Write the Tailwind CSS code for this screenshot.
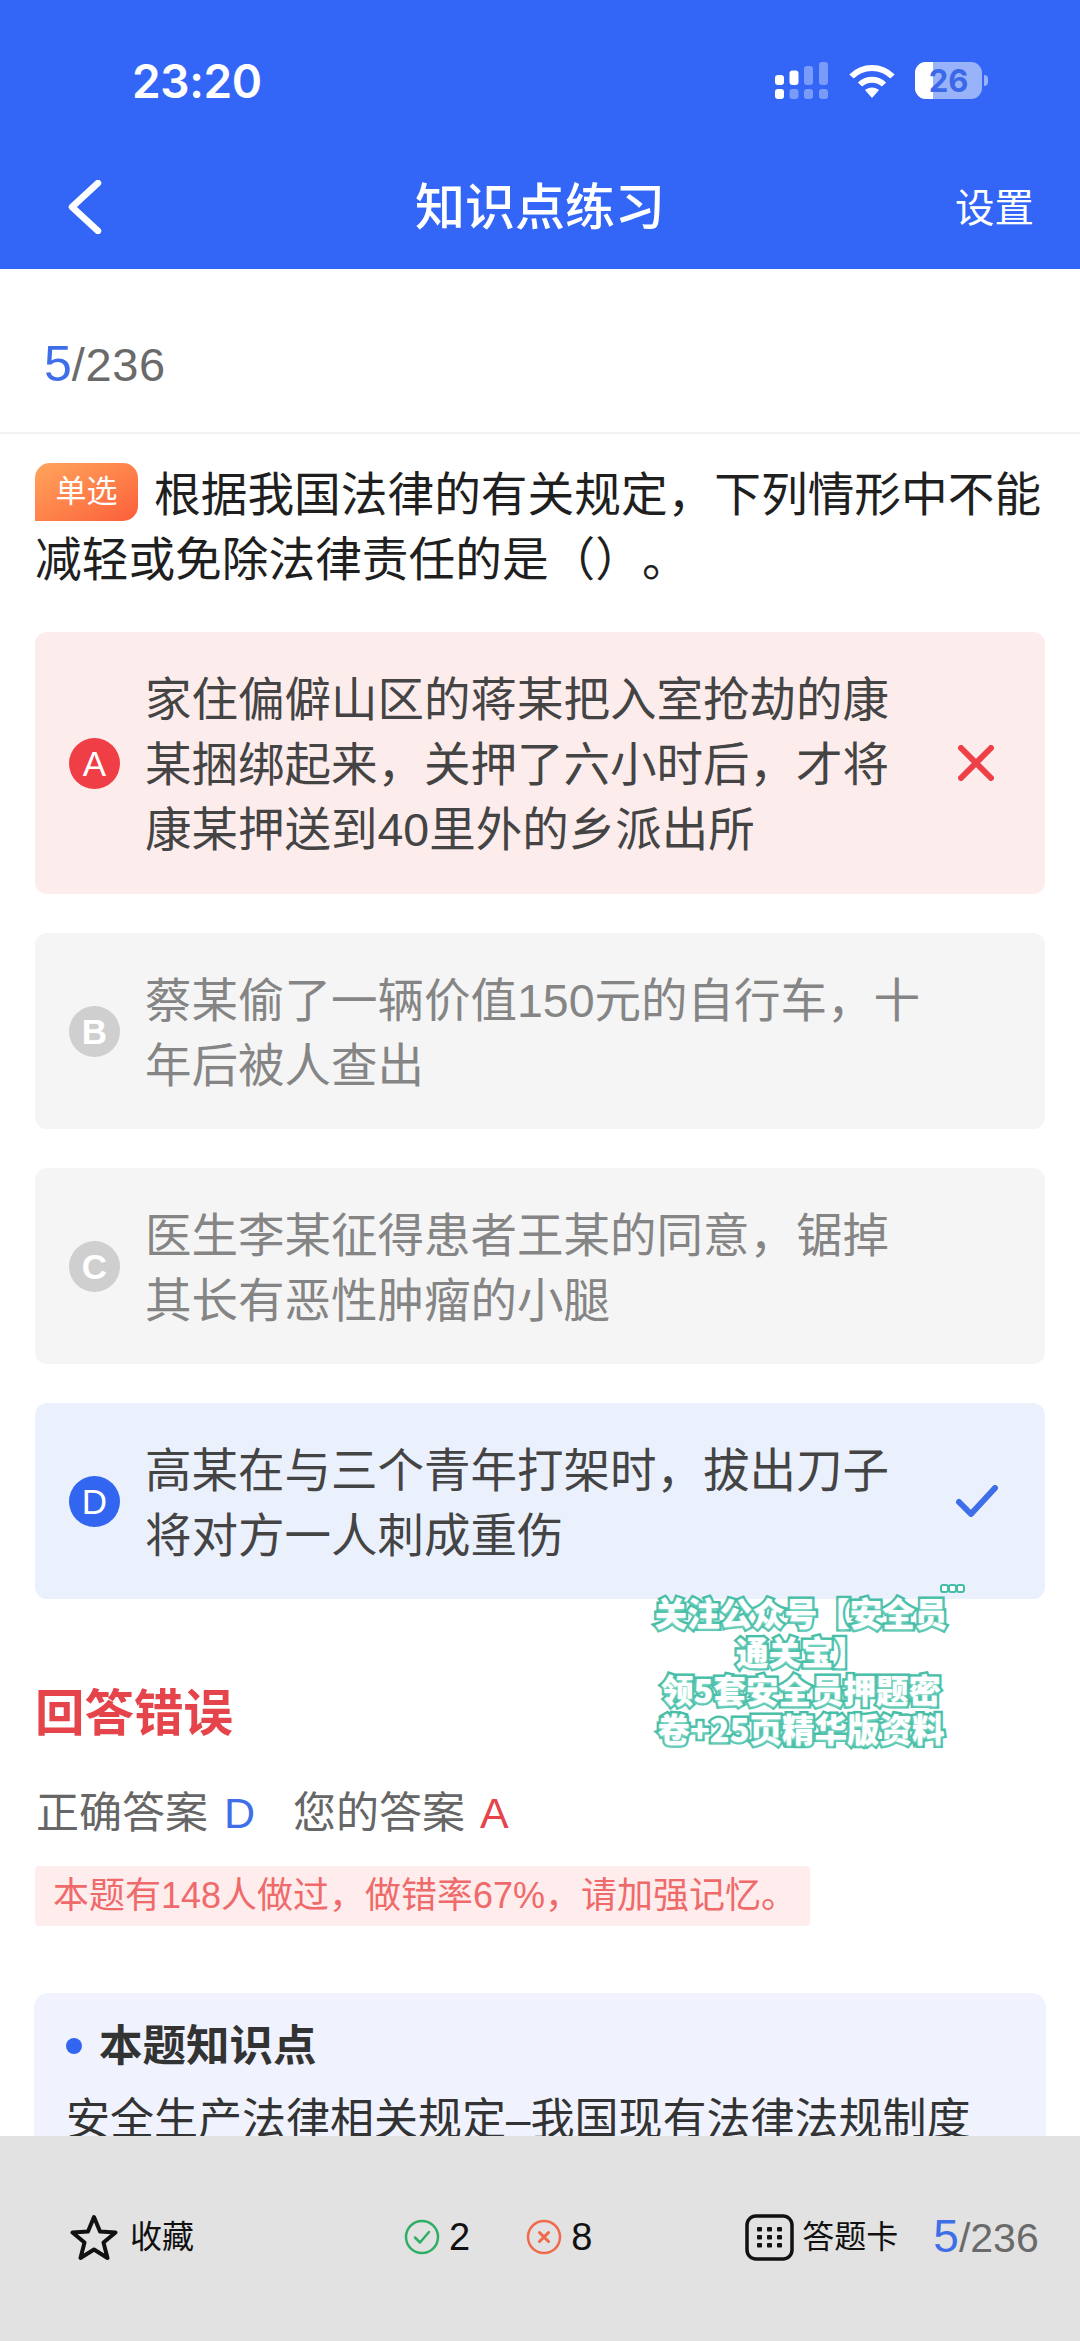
<!DOCTYPE html>
<html lang="zh-CN">
<head>
<meta charset="utf-8">
<script src="https://cdn.jsdelivr.net/npm/@tailwindcss/browser@4"></script>
</head>
<body class="bg-white">
<div class="relative w-[1080px] h-[2341px] overflow-hidden flex flex-col bg-white font-['Liberation_Sans','Noto_Sans_CJK_SC',sans-serif] [text-spacing-trim:space-all]">

  <!-- Header -->
  <header class="h-[269px] shrink-0 bg-[#3366f6] text-white">
    <div class="h-[162px] pt-[51px] flex items-start pl-[132px] pr-[90px]">
      <span class="font-['Inter',sans-serif] font-semibold text-[46px] leading-[60px] tracking-[-0.4px]">23:20</span>
      <div class="ml-auto flex items-center gap-[21px] pt-[11px]">
        <svg width="53" height="37" viewBox="0 0 53 37" fill="#fff">
          <rect x="0" y="13" width="9" height="10" rx="3"/>
          <rect x="14.500" y="8.500" width="9" height="14.500" rx="3"/>
          <rect x="29" y="4" width="9" height="19" rx="3" opacity=".35"/>
          <rect x="44" y="0" width="9" height="23" rx="3" opacity=".35"/>
          <rect x="0" y="27" width="9" height="10" rx="3"/>
          <rect x="14.500" y="27" width="9" height="10" rx="3" opacity=".35"/>
          <rect x="29" y="27" width="9" height="10" rx="3" opacity=".35"/>
          <rect x="44" y="27" width="9" height="10" rx="3" opacity=".35"/>
        </svg>
        <svg width="46" height="34" viewBox="0 0 46 34" fill="none" stroke="#fff" stroke-width="6">
          <path d="M2.500 12.500C13.500 1 32.500 1 43.500 12.500"/>
          <path d="M11 20.500C17.500 14 28.500 14 35 20.500"/>
          <path d="M16 26L23 34L30 26C26 22.500 20 22.500 16 26Z" fill="#fff" stroke="none"/>
        </svg>
        <div class="relative w-[75px] h-[37px] -ml-[1px]">
          <div class="absolute left-0 top-0 w-[67px] h-[37px] rounded-[11px] bg-white/50 overflow-hidden">
            <div class="w-[18px] h-full bg-white"></div>
          </div>
          <div class="absolute left-[69px] top-[13px] w-[4px] h-[11px] rounded-r-[4px] bg-white/50"></div>
          <span class="absolute left-0 top-0 w-[67px] text-center font-['Inter',sans-serif] font-bold text-[31px] leading-[37px] text-[#3a68e8]">26</span>
        </div>
      </div>
    </div>
    <div class="relative h-[106px] -mt-[1px] flex items-center justify-center pb-[12px]">
      <svg class="absolute left-[67px] top-[19px]" width="36" height="54" viewBox="0 0 36 54" fill="none" stroke="#fff" stroke-width="6.500" stroke-linecap="round" stroke-linejoin="round">
        <path d="M31 3L5 27L31 51"/>
      </svg>
      <h1 class="text-[50px] leading-[60px] font-medium">知识点练习</h1>
      <span class="absolute left-[955px] top-[23px] text-[39.500px] leading-[48px]">设置</span>
    </div>
  </header>

  <!-- Content -->
  <main class="flex-1 min-h-0 overflow-hidden">
    <div class="h-[165px] border-b-[2px] border-[#f2f2f2] pl-[44px] pt-[67px] flex items-baseline text-[#6a6a6a]">
      <span class="text-[50px] leading-[56px] text-[#3f6fe8]">5</span><span class="text-[47px] leading-[56px] tracking-[0.6px] font-light">/236</span>
    </div>

    <div class="px-[35px] pt-[29px]">
      <p class="text-[46.700px] leading-[65px] text-[#1f1f1f] whitespace-nowrap">
        <span class="inline-block align-[9px] w-[103px] h-[58px] -my-[30px] mr-[16px] rounded-r-[15px] rounded-tl-[15px] bg-gradient-to-br from-[#ffa45c] to-[#fb5d3a] text-white text-[31px] leading-[58px] text-center">单选</span>根据我国法律的有关规定，下列情形中不能<br>减轻或免除法律责任的是（）。
      </p>

      <div class="mt-[39px] flex flex-col gap-[39px]">
        <div class="flex items-center h-[262px] rounded-[12px] bg-[#fdecec] pl-[34px] pr-[51px]">
          <span class="w-[51px] h-[51px] shrink-0 rounded-full bg-[#ef3e46] text-white text-[35px] leading-[51px] text-center">A</span>
          <p class="ml-[25px] pt-[5px] text-[46.500px] leading-[65px] text-[#444] whitespace-nowrap">家住偏僻山区的蒋某把入室抢劫的康<br>某捆绑起来，关押了六小时后，才将<br>康某押送到40里外的乡派出所</p>
          <svg class="ml-auto" width="36" height="36" viewBox="0 0 36 36" fill="none" stroke="#ee4048" stroke-width="6" stroke-linecap="round"><path d="M3 3L33 33M33 3L3 33"/></svg>
        </div>

        <div class="flex items-center h-[196px] rounded-[12px] bg-[#f5f5f5] pl-[34px] pr-[54px]">
          <span class="w-[51px] h-[51px] shrink-0 rounded-full bg-[#cfcfcf] text-white text-[35px] font-bold leading-[51px] text-center">B</span>
          <p class="ml-[25px] pt-[5px] text-[46.500px] leading-[65px] text-[#858585] whitespace-nowrap">蔡某偷了一辆价值150元的自行车，十<br>年后被人查出</p>
        </div>

        <div class="flex items-center h-[196px] rounded-[12px] bg-[#f5f5f5] pl-[34px] pr-[54px]">
          <span class="w-[51px] h-[51px] shrink-0 rounded-full bg-[#cfcfcf] text-white text-[35px] font-bold leading-[51px] text-center">C</span>
          <p class="ml-[25px] pt-[5px] text-[46.500px] leading-[65px] text-[#858585] whitespace-nowrap">医生李某征得患者王某的同意，锯掉<br>其长有恶性肿瘤的小腿</p>
        </div>

        <div class="flex items-center h-[196px] rounded-[12px] bg-[#ebf0fd] pl-[34px] pr-[47px]">
          <span class="w-[51px] h-[51px] shrink-0 rounded-full bg-[#3366f0] text-white text-[35px] leading-[51px] text-center">D</span>
          <p class="ml-[25px] pt-[5px] text-[46.500px] leading-[65px] text-[#444] whitespace-nowrap">高某在与三个青年打架时，拔出刀子<br>将对方一人刺成重伤</p>
          <svg class="ml-auto" width="42" height="32" viewBox="0 0 42 32" fill="none" stroke="#3f6fe8" stroke-width="6" stroke-linecap="round" stroke-linejoin="round"><path d="M3 17L15 29L39 3"/></svg>
        </div>
      </div>

      <h2 class="mt-[85px] text-[49.500px] leading-[60px] font-bold text-[#e4444a]">回答错误</h2>

      <p class="mt-[41px] flex items-center text-[43px] leading-[56px] text-[#666] whitespace-nowrap">
        <span class="ml-[1px]">正确答案</span><span class="ml-[16px] text-[#3f6fe8]">D</span><span class="ml-[38px]">您的答案</span><span class="ml-[15px] text-[#e4444a]">A</span>
      </p>

      <div class="mt-[25px] w-[775px] h-[60px] rounded-[4px] bg-[#ffecec] pl-[18px] text-[36px] leading-[60px] text-[#ef6a6a] whitespace-nowrap">本题有148人做过，做错率67%，请加强记忆。</div>

      <section class="mt-[67px] -mx-[1px] h-[300px] rounded-[14px] bg-[#f0f3fe] pl-[32px] pt-[25px]">
        <h3 class="flex items-center text-[43.500px] leading-[56px] font-bold text-[#333]"><span class="w-[16px] h-[16px] rounded-full bg-[#3366f0] mr-[17px]"></span>本题知识点</h3>
        <p class="mt-[16px] text-[44px] leading-[60px] text-[#333] whitespace-nowrap">安全生产法律相关规定–我国现有法律法规制度</p>
      </section>
    </div>
  </main>

  <!-- Bottom bar -->
  <footer class="h-[205px] shrink-0 bg-[#e2e2e2] flex items-start pt-[77px] pl-[70px] text-[#111]">
    <div class="flex items-center h-[48px]">
      <svg width="48" height="47" viewBox="0 0 48 47" fill="none" stroke="#111" stroke-width="4" stroke-linejoin="round"><path d="M24 3L30 17.500L45.500 18.500L33.500 28.500L37.500 44L24 35.500L10.500 44L14.500 28.500L2.500 18.500L18 17.500Z"/></svg>
      <span class="ml-[12px] text-[32px] leading-[40px]">收藏</span>
    </div>
    <div class="flex items-center h-[48px] ml-[210px]">
      <svg width="36" height="36" viewBox="0 0 36 36" fill="none" stroke="#2fae66" stroke-width="2.500"><circle cx="18" cy="18" r="16"/><path d="M11 18.500L16 23.500L25 13" stroke-linecap="round" stroke-linejoin="round"/></svg>
      <span class="ml-[9px] text-[38px] leading-[44px]">2</span>
    </div>
    <div class="flex items-center h-[48px] ml-[56px]">
      <svg width="36" height="36" viewBox="0 0 36 36" fill="none" stroke="#f0694a" stroke-width="2.500"><circle cx="18" cy="18" r="16"/><path d="M13.500 13.500L22.500 22.500M22.500 13.500L13.500 22.500" stroke-linecap="round" stroke-width="3"/></svg>
      <span class="ml-[9px] text-[38px] leading-[44px]">8</span>
    </div>
    <div class="flex items-center h-[48px] ml-[153px]">
      <svg width="49" height="47" viewBox="0 0 49 47" fill="none"><rect x="2" y="2" width="45" height="43" rx="9" stroke="#111" stroke-width="3.500"/><g fill="#111"><rect x="12" y="13" width="5" height="4.500" rx="1"/><rect x="22" y="13" width="5" height="4.500" rx="1"/><rect x="32" y="13" width="5" height="4.500" rx="1"/><rect x="12" y="21" width="5" height="4.500" rx="1"/><rect x="22" y="21" width="5" height="4.500" rx="1"/><rect x="32" y="21" width="5" height="4.500" rx="1"/><rect x="12" y="29" width="5" height="4.500" rx="1"/><rect x="22" y="29" width="5" height="4.500" rx="1"/><rect x="32" y="29" width="5" height="4.500" rx="1"/></g></svg>
      <span class="ml-[8px] text-[32px] leading-[40px]">答题卡</span>
      <span class="ml-[35px] flex items-baseline text-[#6a6a6a]"><span class="text-[46px] leading-[48px] text-[#3f6fe8]">5</span><span class="text-[41px] leading-[48px]">/236</span></span>
    </div>
  </footer>

  <!-- Floating watermark -->
  <div class="absolute left-[640px] top-[1593px] w-[322px] text-center text-[32.500px] leading-[38.500px] font-black text-white [font-family:'Noto_Sans_CJK_SC',sans-serif] [-webkit-text-stroke:5px_#45bda6] [paint-order:stroke_fill] [text-shadow:0_1px_3px_#9fe3d5] whitespace-nowrap">关注公众号【安全员<br>通关宝】<br>领5套安全员押题密<br>卷+25页精华版资料</div>
  <div class="absolute left-[942px] top-[1586px] flex gap-[3px]">
    <span class="w-[5px] h-[5px] rounded-[1px] bg-white outline-[2px] outline-solid outline-[#45bda6]"></span>
    <span class="w-[5px] h-[5px] rounded-[1px] bg-white outline-[2px] outline-solid outline-[#45bda6]"></span>
    <span class="w-[5px] h-[5px] rounded-[1px] bg-white outline-[2px] outline-solid outline-[#45bda6]"></span>
  </div>
</div>
</body>
</html>
